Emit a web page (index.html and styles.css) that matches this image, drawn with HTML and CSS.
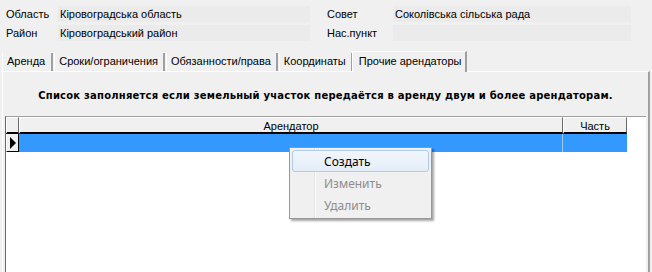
FILE: index.html
```html
<!DOCTYPE html>
<html lang="ru">
<head>
  <meta charset="UTF-8">
  <title>Прочие арендаторы</title>
  <link rel="stylesheet" href="styles.css">
</head>
<body>

<div class="info">
  <div class="info-col">
    <div class="info-row"><span class="lbl">Область</span><span class="fld">Кіровоградська область</span></div>
    <div class="info-row"><span class="lbl">Район</span><span class="fld">Кіровоградський район</span></div>
  </div>
  <div class="info-col right">
    <div class="info-row"><span class="lbl">Совет</span><span class="fld">Соколівська сільська рада</span></div>
    <div class="info-row"><span class="lbl">Нас.пункт</span><span class="fld"></span></div>
  </div>
</div>

<div class="tabs">
  <div class="tab">Аренда</div>
  <div class="tab">Сроки/ограничения</div>
  <div class="tab">Обязанности/права</div>
  <div class="tab">Координаты</div>
  <div class="tab active">Прочие арендаторы</div>
</div>

<div class="panel">
  <p class="note">Список заполняется если земельный участок передаётся в аренду двум и более арендаторам.</p>

  <div class="grid">
    <div class="grid-head">
      <div class="ind"></div>
      <div class="col-name">Арендатор</div>
      <div class="col-part">Часть</div>
    </div>
    <div class="grid-row">
      <div class="ind"><span class="arrow"></span></div>
      <div class="col-name"></div>
      <div class="col-part"></div>
    </div>
  </div>

  <div class="menu">
    <div class="menu-item hot">Создать</div>
    <div class="menu-item off">Изменить</div>
    <div class="menu-item off">Удалить</div>
  </div>
</div>

</body>
</html>
```

FILE: styles.css
```css
html, body {
  margin: 0;
  height: 272px;
  overflow: hidden;
}

body {
  background: #f0f0f0;
  font-family: 'Liberation Sans', Arial, sans-serif;
  font-size: 11px;
  color: #000;
}

.info {
  display: flex;
  padding: 6px 7px 0 6px;
  gap: 17px;
}

.info-col {
  display: flex;
  flex-direction: column;
  gap: 3px;
  width: 304px;
}

.info-row {
  display: flex;
  height: 16px;
  align-items: center;
}

.lbl {
  width: 52px;
}

.right .lbl {
  width: 66px;
}

.fld {
  flex: 1;
  height: 16px;
  line-height: 16px;
  background: #ebebeb;
  padding-left: 2px;
}

.tabs {
  display: flex;
  margin-top: 9px;
  padding-left: 2px;
  height: 21px;
  align-items: flex-end;
}

.tab {
  height: 18px;
  line-height: 17px;
  padding: 0 5px 0 4px;
  border-left: 1px solid #fff;
  border-right: 2px solid #a0a0a0;
  box-sizing: border-box;
  margin-right: 1px;
}

.tab:first-child {
  padding-right: 6px;
}

.tab.active {
  height: 21px;
  line-height: 19px;
  padding: 0 4px 0 6px;
  margin-left: -2px;
  border-top: 1px solid #fff;
  background: #f0f0f0;
  margin-bottom: -1px;
  position: relative;
  z-index: 1;
}

.panel {
  position: relative;
  margin: 0 0 0 2px;
  width: 648px;
  height: 201px;
  box-sizing: border-box;
  border-top: 1px solid #fff;
  border-left: 1px solid #fff;
  border-right: 2px solid #a0a0a0;
}

.note {
  margin: 17px 0 0 0;
  text-align: center;
  font-family: 'DejaVu Sans', Verdana, sans-serif;
  font-weight: bold;
  font-size: 10px;
  letter-spacing: 0.22px;
  height: 14px;
  line-height: 14px;
}

.grid {
  margin: 13px 0 0 2px;
  width: 641px;
  height: 160px;
  background: #fff;
  border-top: 1px solid #a0a0a0;
  border-left: 1px solid #696969;
  box-sizing: border-box;
}

.grid-head, .grid-row {
  display: flex;
}

.grid-head > div {
  height: 17px;
  line-height: 16px;
  background: #f0f0f0;
  box-sizing: border-box;
  border-top: 1px solid #fff;
  border-left: 1px solid #fff;
  border-right: 1px solid #696969;
  border-bottom: 2px solid #000;
  text-align: center;
}

.ind {
  width: 13px;
  flex: none;
}

.col-name {
  width: 544px;
  flex: none;
}

.col-part {
  width: 64px;
  flex: none;
}

.grid-row > div {
  height: 18px;
  box-sizing: border-box;
}

.grid-row .ind {
  background: #f0f0f0;
  border-right: 1px solid #000;
  border-bottom: 1px solid #000;
  border-left: 1px solid #fff;
  position: relative;
}

.grid-row .col-name {
  background: #3399ff;
  border-right: 1px solid #a0c8f0;
}

.grid-row .col-part {
  background: #3399ff;
}

.arrow {
  position: absolute;
  left: 3px;
  top: 3px;
  width: 0;
  height: 0;
  border-top: 6px solid transparent;
  border-bottom: 6px solid transparent;
  border-left: 6px solid #000;
}

.menu {
  position: absolute;
  left: 286px;
  top: 75px;
  width: 137px;
  padding: 2px;
  background: #f0f0f0 linear-gradient(to right, #f0f0f0 24px, #e2e3e3 24px, #e2e3e3 25px, #fff 25px, #fff 26px, #f0f0f0 26px);
  border: 1px solid #979797;
  box-shadow: 2px 2px 2px rgba(0, 0, 0, 0.35);
  font-family: 'Noto Sans', 'Open Sans', sans-serif;
  font-size: 12px;
}

.menu-item {
  height: 22px;
  line-height: 21px;
  padding-left: 31px;
  box-sizing: border-box;
  border: 1px solid transparent;
  border-radius: 3px;
}

.menu-item.hot {
  border-color: #aeccf0;
  background: linear-gradient(#f2f6fb, #e4edf8);
  color: #000;
}

.menu-item.off {
  color: #8d8d8d;
}
```
